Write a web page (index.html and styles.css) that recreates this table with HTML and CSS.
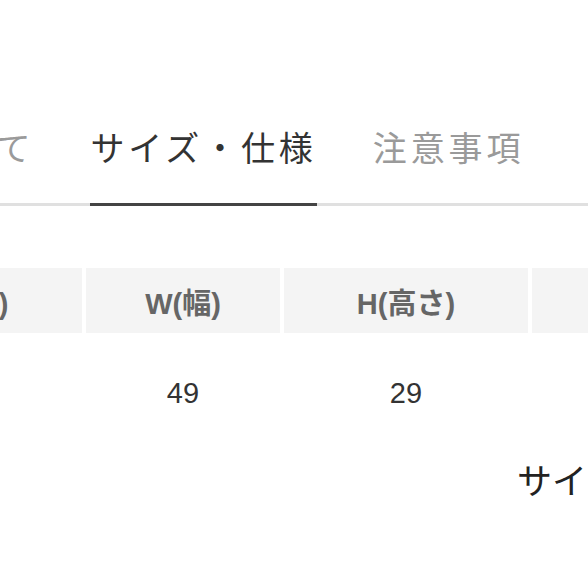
FILE: index.html
```html
<!DOCTYPE html>
<html lang="ja">
<head>
<meta charset="utf-8">
<title>サイズ・仕様</title>
<link rel="stylesheet" href="styles.css">
</head>
<body>
<div class="page">
  <nav class="tabs">
    <div class="tab">商品について</div>
    <div class="tab active">サイズ・仕様</div>
    <div class="tab">注意事項</div>
  </nav>
  <div class="spec">
    <div class="head">L(長さ)</div>
    <div class="head">W(幅)</div>
    <div class="head">H(高さ)</div>
    <div class="head">重さ</div>
    <div class="val">70</div>
    <div class="val">49</div>
    <div class="val">29</div>
    <div class="val">2.1kg</div>
  </div>
  <h2 class="subhead">サイズの測り方</h2>
</div>
</body>
</html>
```
FILE: styles.css
```css
html, body {
  margin: 0;
  padding: 0;
  background: #fff;
  overflow: hidden;
}
.page {
  width: 588px;
  height: 588px;
  overflow: hidden;
  font-family: "Noto Sans CJK JP", sans-serif;
}
.tabs {
  display: flex;
  gap: 56px;
  padding-top: 121px;
  margin-left: -192px;
  width: 1000px;
  border-bottom: 3px solid #e0e0e0;
}
.tab {
  font-size: 34px;
  line-height: 51px;
  letter-spacing: 3.9px;
  color: #9a9a9a;
  padding-bottom: 31px;
  margin-bottom: -3px;
  border-bottom: 3px solid transparent;
  white-space: nowrap;
}
.tab.active {
  color: #333;
  border-bottom-color: #444;
}
.spec {
  display: grid;
  grid-template-columns: 242px 194px 244px 244px;
  column-gap: 4px;
  margin-top: 62px;
  margin-left: -160px;
  width: 940px;
}
.head {
  background: #f4f4f4;
  height: 65px;
  display: flex;
  align-items: center;
  justify-content: center;
  font-family: "Liberation Sans", "Noto Sans CJK JP", sans-serif;
  font-weight: 700;
  font-size: 29px;
  color: #666;
  white-space: nowrap;
}
.val {
  padding-top: 40px;
  text-align: center;
  font-family: "Liberation Sans", "Noto Sans CJK JP", sans-serif;
  font-size: 29px;
  line-height: 40px;
  color: #333;
}
.subhead {
  margin: 39px 0 0 517px;
  font-size: 35px;
  line-height: 54px;
  font-weight: 400;
  color: #222;
  white-space: nowrap;
}
```
